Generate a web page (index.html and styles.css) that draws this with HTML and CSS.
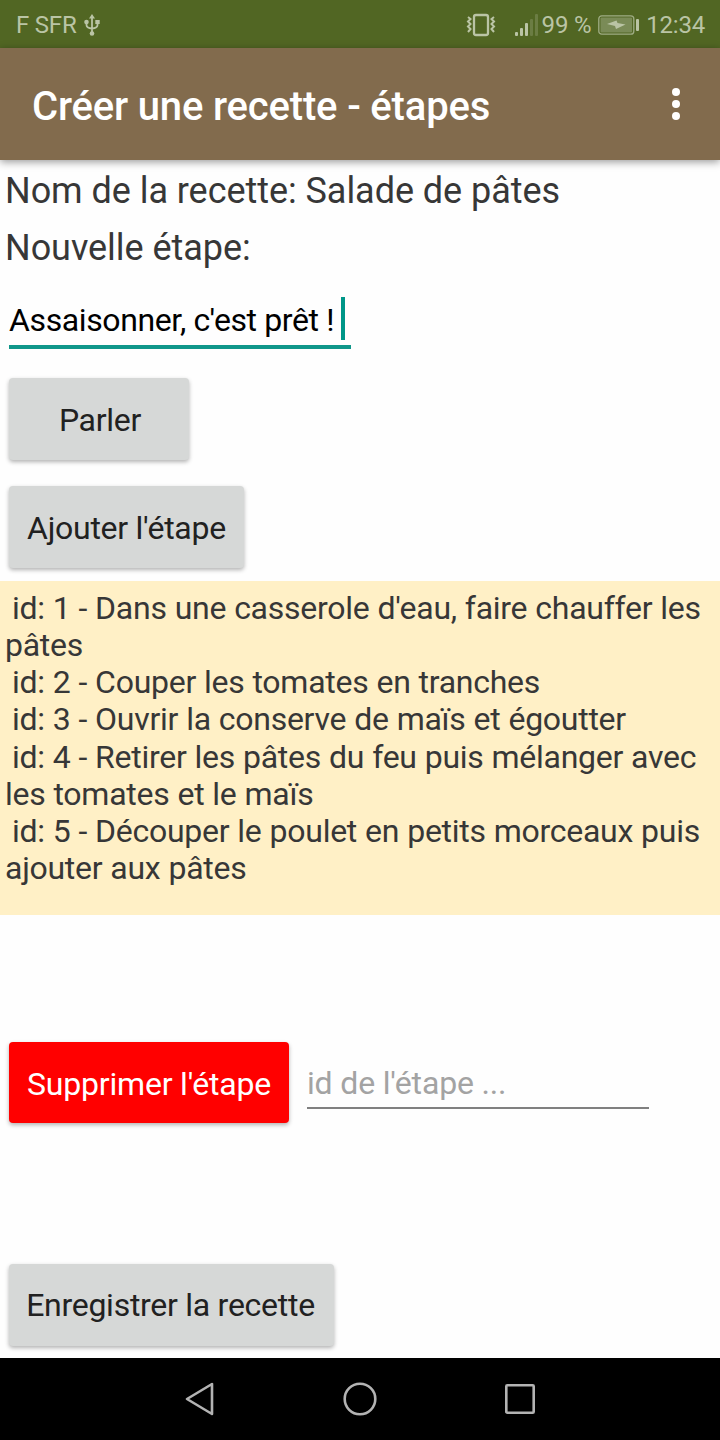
FILE: index.html
```
<!DOCTYPE html>
<html lang="fr">
  <head>
    <meta charset="UTF-8" />
    <meta name="viewport" content="width=device-width, initial-scale=1.0" />
    <title>Créer une recette - étapes</title>
    <link rel="stylesheet" href="styles.css">
  </head>
  <body>
    <div class="status-bar">
      <span class="carrier">F SFR</span>
      <svg class="usb" width="16" height="24" viewBox="0 0 16 24">
        <path d="M8 4V20M2.5 8V12Q2.5 15 8 15.500Q13.500 15 13.500 12V8" fill="none" stroke="currentColor" stroke-width="1.800" />
        <path d="M8 1L11 5.500H5Z" fill="currentColor" />
        <circle cx="2.500" cy="9" r="2.300" fill="currentColor" />
        <rect x="11.300" y="7" width="4.400" height="4" fill="currentColor" />
        <circle cx="8" cy="20.500" r="2.300" fill="currentColor" />
      </svg>
      <svg class="vibrate" width="30" height="24" viewBox="0 0 30 24">
        <g fill="none" stroke="currentColor" stroke-width="2">
          <rect x="8" y="2" width="14" height="20" rx="2" stroke-width="2.300" />
          <path d="M2 4L4.500 6L2 8.500L4.500 11L2 13.500L4.500 16L2 19" />
          <path d="M28 4L25.500 6L28 8.500L25.500 11L28 13.500L25.500 16L28 19" />
        </g>
      </svg>
      <svg class="signal" width="24" height="24" viewBox="0 0 24 24" fill="currentColor">
        <rect x="0" y="19" width="3" height="4" rx="1" />
        <rect x="5" y="15" width="3" height="8" rx="1" />
        <rect x="10" y="10" width="3" height="13" rx="1" />
        <rect x="15" y="6" width="3" height="17" rx="1" opacity="0.25" />
        <rect x="20" y="1" width="3" height="22" rx="1" opacity="0.25" />
      </svg>
      <span class="percent">99 %</span>
      <svg class="battery" width="42" height="22" viewBox="0 0 42 22">
        <rect x="0.800" y="1.800" width="35" height="18.400" rx="3" fill="none" stroke="currentColor" stroke-width="1.300" opacity="0.75" />
        <rect x="2.500" y="3.500" width="31.600" height="15" rx="1" fill="currentColor" opacity="0.4" />
        <path d="M9 10L18.500 6.500L19.500 9L27.500 10.500L18 15L17 12Z" fill="currentColor" />
        <rect x="38" y="5" width="3" height="12" rx="1" fill="currentColor" />
      </svg>
      <span class="clock">12:34</span>
    </div>

    <header class="app-bar">
      <h1>Créer une recette - étapes</h1>
      <button class="menu">
        <svg width="10" height="34" viewBox="0 0 10 34" fill="#fff">
          <circle cx="5" cy="5" r="4" />
          <circle cx="5" cy="17" r="4" />
          <circle cx="5" cy="29" r="4" />
        </svg>
      </button>
    </header>

    <main>
      <p class="label">Nom de la recette: Salade de pâtes</p>
      <p class="label">Nouvelle étape:</p>
      <div class="field"><span class="field-text">Assaisonner, c'est prêt !</span><span class="caret"></span></div>

      <button class="btn speak">Parler</button>
      <button class="btn add">Ajouter l'étape</button>

      <ul class="steps">
        <li>id: 1 - Dans une casserole d'eau, faire chauffer les pâtes</li>
        <li>id: 2 - Couper les tomates en tranches</li>
        <li>id: 3 - Ouvrir la conserve de maïs et égoutter</li>
        <li>id: 4 - Retirer les pâtes du feu puis mélanger avec les tomates et le maïs</li>
        <li>id: 5 - Découper le poulet en petits morceaux puis ajouter aux pâtes</li>
      </ul>

      <div class="delete-row">
        <button class="btn delete">Supprimer l'étape</button>
        <input class="step-id" type="text" placeholder="id de l'étape ..." />
      </div>

      <button class="btn save">Enregistrer la recette</button>
    </main>

    <nav class="nav-bar">
      <svg width="34" height="36" viewBox="0 0 34 36">
        <path d="M29 3V33L4 18Z" />
      </svg>
      <svg width="34" height="36" viewBox="0 0 34 36">
        <circle cx="17" cy="18" r="15.300" />
      </svg>
      <svg width="34" height="36" viewBox="0 0 34 36">
        <rect x="3.300" y="4.300" width="27.400" height="27.400" rx="1" />
      </svg>
    </nav>
  </body>
</html>
```
FILE: styles.css
```
* {
  box-sizing: border-box;
}

body {
  margin: 0;
  height: 1440px;
  display: flex;
  flex-direction: column;
  background: #fefefe;
  font-family: Roboto, sans-serif;
  font-size: 32px;
  letter-spacing: -0.21px;
  color: #373737;
  overflow: hidden;
}

.status-bar {
  height: 48px;
  flex-shrink: 0;
  display: flex;
  align-items: center;
  padding: 2px 15px 0 16px;
  background: #516623;
  color: #bac4a5;
  font-size: 24px;
}

.status-bar svg {
  flex-shrink: 0;
}

.usb {
  margin-left: 8px;
}

.vibrate {
  margin-left: auto;
}

.signal {
  margin-left: 19px;
}

.percent {
  margin-left: 3px;
}

.battery {
  margin-left: 7px;
}

.clock {
  margin-left: 6px;
}

.app-bar {
  height: 112px;
  flex-shrink: 0;
  display: flex;
  align-items: center;
  justify-content: space-between;
  padding: 5px 39px 0 32px;
  background: #826b4d;
  box-shadow: 0 2px 8px rgba(0, 0, 0, 0.4);
}

.app-bar h1 {
  margin: 0;
  font-size: 40px;
  font-weight: 500;
  letter-spacing: -0.17px;
  color: #fff;
}

.menu {
  display: flex;
  padding: 0;
  margin-top: -5px;
  background: none;
  border: none;
}

main {
  flex: 1;
  display: flex;
  flex-direction: column;
  align-items: flex-start;
  padding-top: 10px;
}

.label {
  margin: 0 0 15px 5px;
  font-size: 36px;
  line-height: 42px;
  letter-spacing: -0.05px;
}

.field {
  width: 342px;
  height: 52px;
  display: flex;
  margin: 13px 0 29px 9px;
  border-bottom: 4px solid #10978a;
  color: #000;
  line-height: 46px;
  letter-spacing: -0.38px;
}

.field-text {
  white-space: nowrap;
}

.caret {
  width: 4px;
  height: 43px;
  flex-shrink: 0;
  margin-left: 7px;
  background: #009688;
}

.btn {
  height: 82px;
  margin-left: 9px;
  padding: 2px 18px 0;
  border: none;
  border-radius: 4px;
  background: #d6d8d7;
  box-shadow: 0 2px 4px rgba(0, 0, 0, 0.3);
  font-family: inherit;
  font-size: 32px;
  letter-spacing: -0.27px;
  color: #212121;
  white-space: nowrap;
}

.speak {
  width: 180px;
  margin-bottom: 26px;
  padding-left: 20px;
}

.add {
  width: 235px;
}

.steps {
  width: 100%;
  height: 334px;
  margin: 13px 0 127px;
  padding: 9px 5px 0;
  background: #fff0c6;
  list-style: none;
  line-height: 37.150px;
  letter-spacing: -0.27px;
  word-spacing: 0.350px;
}

.steps li {
  text-indent: 7px;
}

.delete-row {
  display: flex;
  align-items: flex-start;
}

.delete {
  width: 280px;
  height: 81px;
  background: #f00;
  letter-spacing: -0.2px;
  color: #fff;
}

.step-id {
  width: 342px;
  height: 47px;
  margin: 20px 0 0 18px;
  padding: 0 0 3px;
  border: none;
  border-bottom: 2px solid #808080;
  background: none;
  font-family: inherit;
  font-size: 32px;
  letter-spacing: -0.17px;
}

.step-id::placeholder {
  color: #a3a3a3;
}

.save {
  width: 325px;
  margin-top: 141px;
  padding: 0 19px 0 17px;
}

.nav-bar {
  height: 82px;
  flex-shrink: 0;
  display: flex;
  align-items: center;
  justify-content: center;
  gap: 126px;
  background: #000;
}

.nav-bar svg {
  fill: none;
  stroke: #b3b3b3;
  stroke-width: 2.600;
  stroke-linejoin: round;
}
```
